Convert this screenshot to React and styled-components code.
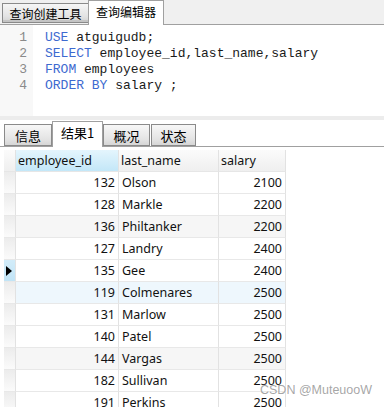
import React from "react";
import styled, { createGlobalStyle } from "styled-components";

const GlobalStyle = createGlobalStyle`
  html, body { margin: 0; padding: 0; background: #ffffff; overflow: hidden; }
  #root { width: 384px; height: 407px; }
`;

const Window = styled.div`
  position: relative;
  width: 384px;
  height: 407px;
  display: flex;
  flex-direction: column;
  overflow: hidden;
  font-family: "Noto Sans", "Noto Sans CJK SC", sans-serif;
  color: #111;
`;

const TopTabBar = styled.div`
  height: 24px;
  flex: none;
  display: flex;
  align-items: flex-end;
  padding-left: 2px;
  background: #f0f0f0;
  border-bottom: 1px solid #a0a0a0;
`;

const TopTab = styled.div`
  box-sizing: border-box;
  display: flex;
  align-items: center;
  justify-content: center;
  font-family: "Noto Sans CJK SC", sans-serif;
  font-size: 12px;
  color: #000;
  border: 1px solid ${(p) => (p.$active ? "#a0a0a0" : "#8a8a8a")};
  ${(p) =>
    p.$active
      ? `
    width: 76px;
    height: 25px;
    margin-bottom: -1px;
    background: #ffffff;
    border-bottom: none;
    padding-bottom: 3px;
  `
      : `
    width: 86px;
    height: 20px;
    margin-bottom: 1px;
    background: linear-gradient(#f6f6f6, #e2e2e2 70%, #d2d2d2);
    border-right: none;
    box-shadow: inset 0 -2px 0 #c4c4c4;
  `}
`;

const Editor = styled.div`
  height: 91px;
  flex: none;
  display: flex;
  background: #ffffff;
`;

const Gutter = styled.div`
  width: 27px;
  padding-right: 6px;
  padding-top: 5px;
  background: #f8f8f8;
  font-family: "Liberation Mono", monospace;
  font-size: 13px;
  line-height: 16px;
  color: #8a8a8a;
  text-align: right;
`;

const Code = styled.div`
  padding-top: 5px;
  padding-left: 12px;
  font-family: "Liberation Mono", monospace;
  font-size: 13px;
  line-height: 16px;
  color: #1a1a1a;
  white-space: pre;
`;

const Keyword = styled.span`
  color: #3d6ad0;
`;

const Splitter = styled.div`
  height: 4px;
  flex: none;
  background: #ececec;
`;

const BottomTabBar = styled.div`
  height: 26px;
  flex: none;
  display: flex;
  align-items: flex-end;
  padding-left: 4px;
  background: #ffffff;
  border-bottom: 1px solid #a0a0a0;
`;

const BottomTab = styled.div`
  box-sizing: border-box;
  display: flex;
  align-items: center;
  justify-content: center;
  width: ${(p) => p.$w}px;
  font-family: "Noto Sans CJK SC", sans-serif;
  font-size: 13px;
  color: #000;
  border: 1px solid ${(p) => (p.$active ? "#a0a0a0" : "#8a8a8a")};
  ${(p) =>
    p.$active
      ? `
    height: 26px;
    margin-bottom: -1px;
    background: #ffffff;
    border-bottom: none;
    padding-bottom: 4px;
  `
      : `
    height: 22px;
    background: linear-gradient(#f7f7f7, #e4e4e4 70%, #d6d6d6);
    margin-right: ${p.$gap || 0}px;
  `}
`;

const GridArea = styled.div`
  flex: 1;
  padding: 3px 0 0 4px;
  background: #ffffff;
`;

const Grid = styled.div`
  display: grid;
  grid-template-columns: 12px 103px 100px 67px;
  grid-auto-rows: 22px;
  width: 282px;
  font-family: "Noto Sans", "Noto Sans CJK SC", sans-serif;
  font-size: 12.5px;
`;

const HeaderCell = styled.div`
  box-sizing: border-box;
  display: flex;
  align-items: center;
  padding-left: 2px;
  border-right: 1px solid #e2e2e2;
  border-bottom: 1px solid #e6e6e6;
  background: ${(p) =>
    p.$sorted
      ? "linear-gradient(#e4f5fd, #c3e7f8)"
      : "linear-gradient(#fbfbfb, #efefef)"};
  color: #111;
`;

const Indicator = styled.div`
  box-sizing: border-box;
  display: flex;
  align-items: center;
  padding-left: 2px;
  border-right: 1px solid #e2e2e2;
  border-bottom: 1px solid #e8e8e8;
  background: ${(p) =>
    p.$selected
      ? "linear-gradient(#d2ecf9, #c1e4f6)"
      : "linear-gradient(#ececec, #fbfbfb)"};
`;

const Cell = styled.div`
  box-sizing: border-box;
  display: flex;
  align-items: center;
  justify-content: ${(p) => (p.$right ? "flex-end" : "flex-start")};
  padding: 0 3px 0 3px;
  border-right: 1px solid #e2e2e2;
  border-bottom: 1px solid #e8e8e8;
  background: ${(p) => p.$bg};
  color: #111;
  white-space: nowrap;
`;

const Watermark = styled.div`
  position: absolute;
  left: 260px;
  top: 383px;
  font-family: "Liberation Sans", sans-serif;
  font-size: 12.5px;
  color: rgba(150, 150, 150, 0.85);
  text-shadow: 0 0 2px rgba(255, 255, 255, 0.9);
  white-space: nowrap;
`;

const rows = [
  [132, "Olson", 2100],
  [128, "Markle", 2200],
  [136, "Philtanker", 2200],
  [127, "Landry", 2400],
  [135, "Gee", 2400],
  [119, "Colmenares", 2500],
  [131, "Marlow", 2500],
  [140, "Patel", 2500],
  [144, "Vargas", 2500],
  [182, "Sullivan", 2500],
  [191, "Perkins", 2500],
];

const rowBg = (i) => {
  if (i === 5) return "#eef7fd";
  if (i === 2 || i === 8) return "#f6f6f6";
  return "#ffffff";
};

const Arrow = () => (
  <svg width="6" height="10" viewBox="0 0 6 10">
    <polygon points="0,0 6,5 0,10" fill="#000" />
  </svg>
);

export default function App() {
  return (
    <>
      <GlobalStyle />
      <Window>
        <TopTabBar>
          <TopTab>查询创建工具</TopTab>
          <TopTab $active>查询编辑器</TopTab>
        </TopTabBar>
        <Editor>
          <Gutter>
            1<br />2<br />3<br />4
          </Gutter>
          <Code>
            <Keyword>USE</Keyword> atguigudb;{"\n"}
            <Keyword>SELECT</Keyword> employee_id,last_name,salary{"\n"}
            <Keyword>FROM</Keyword> employees{"\n"}
            <Keyword>ORDER BY</Keyword> salary ;
          </Code>
        </Editor>
        <Splitter />
        <BottomTabBar>
          <BottomTab $w={48}>信息</BottomTab>
          <BottomTab $w={51} $active>结果1</BottomTab>
          <BottomTab $w={47} $gap={1}>概况</BottomTab>
          <BottomTab $w={45}>状态</BottomTab>
        </BottomTabBar>
        <GridArea>
          <Grid>
            <HeaderCell />
            <HeaderCell $sorted>employee_id</HeaderCell>
            <HeaderCell>last_name</HeaderCell>
            <HeaderCell>salary</HeaderCell>
            {rows.map(([id, name, sal], i) => (
              <React.Fragment key={id}>
                <Indicator $selected={i === 4}>{i === 4 && <Arrow />}</Indicator>
                <Cell $right $bg={rowBg(i)}>{id}</Cell>
                <Cell $bg={rowBg(i)}>{name}</Cell>
                <Cell $right $bg={rowBg(i)}>{sal}</Cell>
              </React.Fragment>
            ))}
          </Grid>
        </GridArea>
        <Watermark>CSDN @MuteuooW</Watermark>
      </Window>
    </>
  );
}
